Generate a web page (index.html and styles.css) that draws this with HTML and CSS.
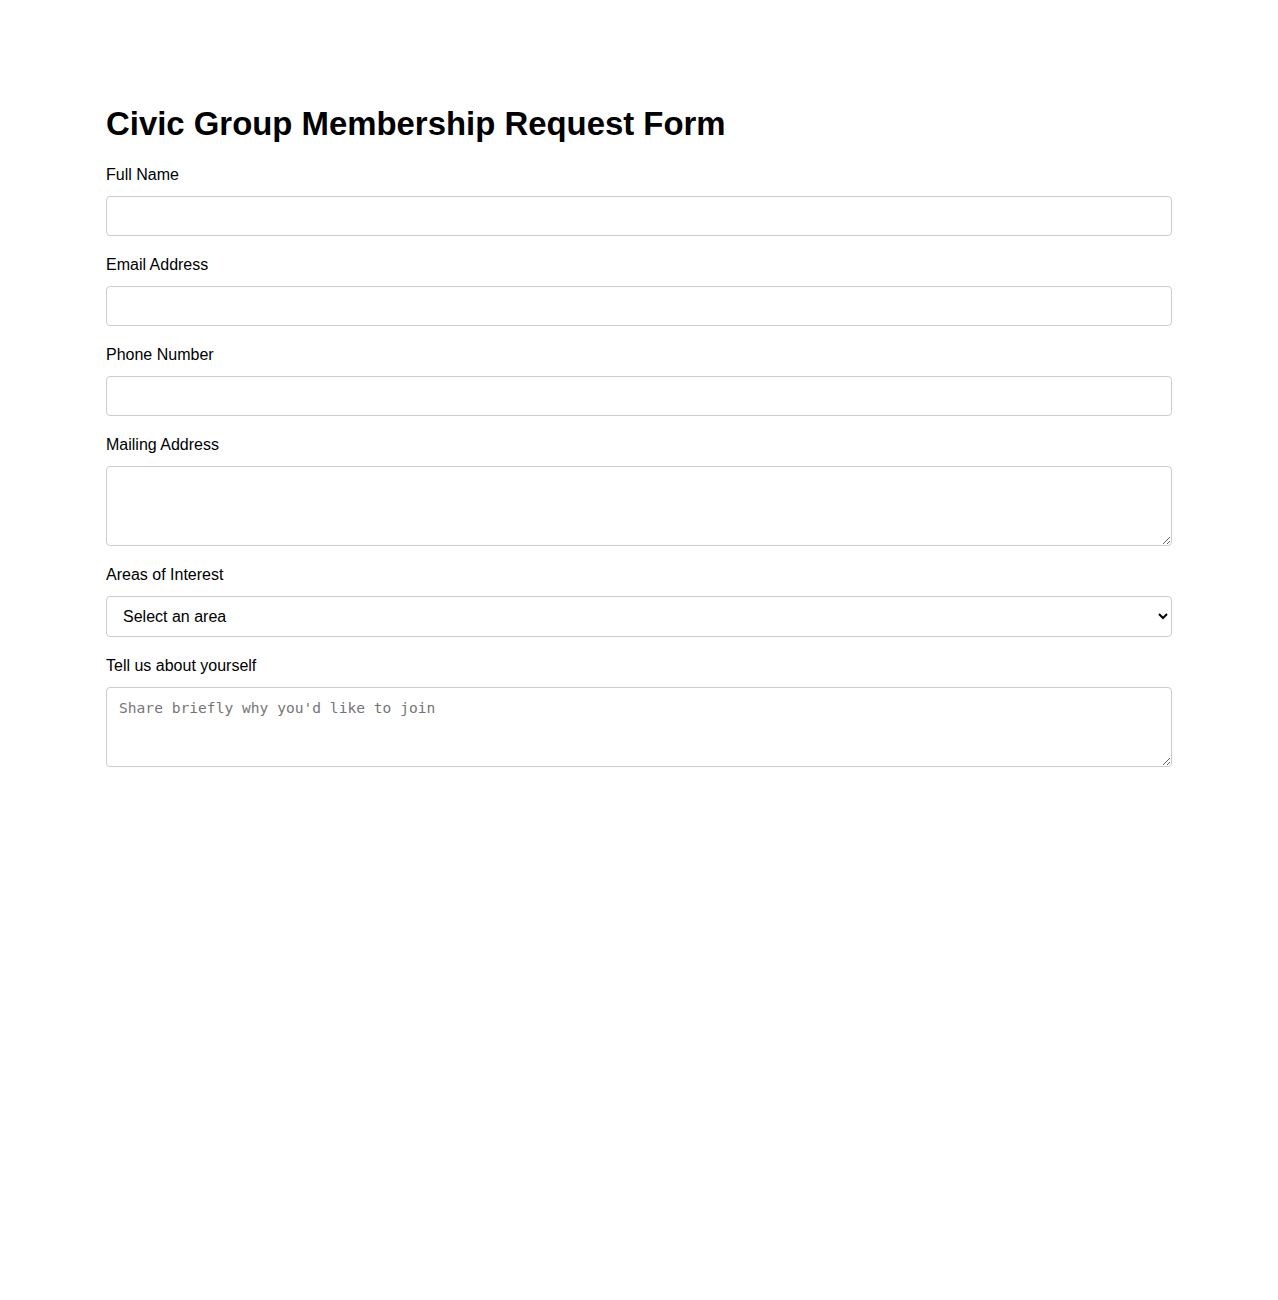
FILE: index.html
```html
<!DOCTYPE html>
<html lang="en">
<head>
    <meta charset="UTF-8">
    <meta name="viewport" content="width=device-width, initial-scale=1.0">
    <title>Civic Group Membership Request Form</title>
    <link rel="stylesheet" href="styles.css">
</head>
<body>
    <div class="container">
        <h1>Civic Group Membership Request Form</h1>

        <form class="member-form">
            <div class="field">
                <label for="fullName">Full Name</label>
                <input type="text" id="fullName" name="fullName">
            </div>

            <div class="field">
                <label for="email">Email Address</label>
                <input type="email" id="email" name="email">
            </div>

            <div class="field">
                <label for="phone">Phone Number</label>
                <input type="tel" id="phone" name="phone">
            </div>

            <div class="field">
                <label for="address">Mailing Address</label>
                <textarea id="address" name="address"></textarea>
            </div>

            <div class="field">
                <label for="interest">Areas of Interest</label>
                <select id="interest" name="interest">
                    <option value="">Select an area</option>
                    <option value="environment">Environment</option>
                    <option value="education">Education</option>
                    <option value="housing">Housing</option>
                    <option value="transport">Transportation</option>
                </select>
            </div>

            <div class="field">
                <label for="about">Tell us about yourself</label>
                <textarea id="about" name="about" placeholder="Share briefly why you'd like to join"></textarea>
            </div>
        </form>
    </div>
</body>
</html>
```

FILE: styles.css
```css
body {
    margin: 0;
    font-family: "Liberation Sans", Arial, sans-serif;
    color: #000;
    background: #fff;
}

.container {
    max-width: 1066px;
    margin: 0 auto;
    padding-top: 105px;
}

h1 {
    margin: 0 0 24px;
    font-size: 32.9px;
    font-weight: bold;
    line-height: 37px;
}

.field {
    margin-bottom: 20px;
}

.field label {
    display: block;
    margin-bottom: 12px;
    font-size: 16px;
    line-height: 18px;
}

.field input,
.field select,
.field textarea {
    display: block;
    width: 100%;
    box-sizing: border-box;
    margin: 0;
    border: 1px solid #ccc;
    border-radius: 4px;
    background: #fff;
    color: #000;
}

.field input {
    height: 40px;
    padding: 10px 12px;
    font-family: "Liberation Sans", Arial, sans-serif;
    font-size: 16px;
}

.field select {
    height: 41px;
    padding: 0 8px 0 12px;
    font-family: "Liberation Sans", Arial, sans-serif;
    font-size: 16px;
}

.field textarea {
    height: 80px;
    padding: 11px 12px 12px;
    font-family: "DejaVu Sans Mono", monospace;
    font-size: 14.6px;
    resize: vertical;
}

.field textarea::placeholder {
    color: #757575;
}
```
